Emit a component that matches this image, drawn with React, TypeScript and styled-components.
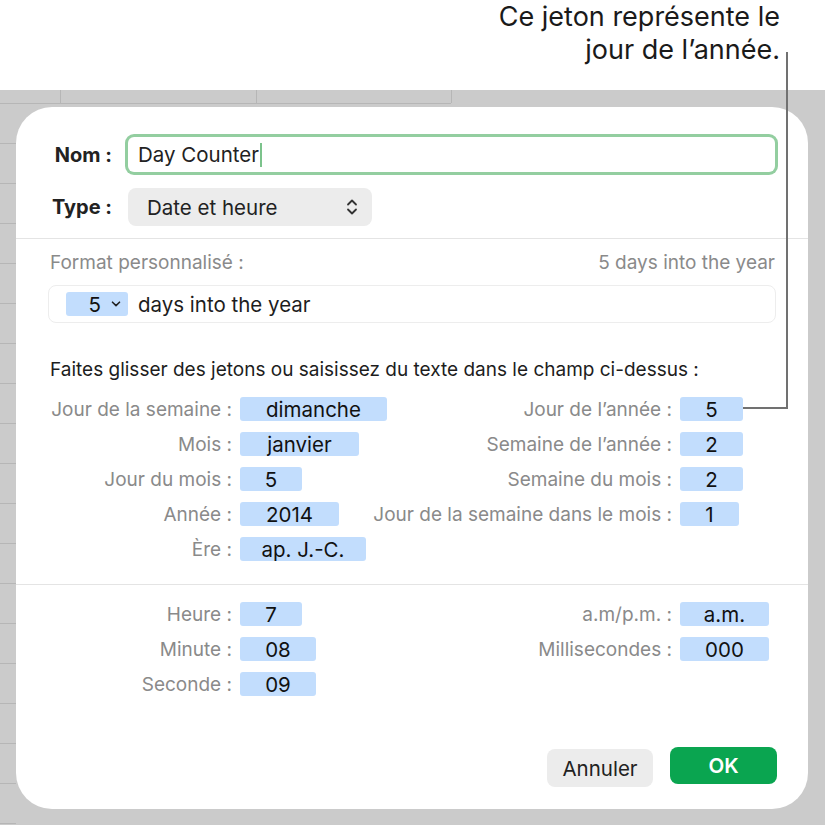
import React from "react";
import styled, { createGlobalStyle } from "styled-components";

const GlobalStyle = createGlobalStyle`
  html, body {
    margin: 0;
    padding: 0;
    background: #fff;
  }
  body {
    font-family: Inter, "Liberation Sans", sans-serif;
    -webkit-font-smoothing: antialiased;
  }
`;

type TokenRow = [string, string, number];

const dateLeft: TokenRow[] = [
  ["Jour de la semaine :", "dimanche", 147],
  ["Mois :", "janvier", 119],
  ["Jour du mois :", "5", 62],
  ["Année :", "2014", 99],
  ["Ère :", "ap. J.-C.", 126],
];

const dateRight: TokenRow[] = [
  ["Jour de l’année :", "5", 63],
  ["Semaine de l’année :", "2", 63],
  ["Semaine du mois :", "2", 63],
  ["Jour de la semaine dans le mois :", "1", 59],
];

const timeLeft: TokenRow[] = [
  ["Heure :", "7", 62],
  ["Minute :", "08", 76],
  ["Seconde :", "09", 76],
];

const timeRight: TokenRow[] = [
  ["a.m/p.m. :", "a.m.", 89],
  ["Millisecondes :", "000", 89],
];

const Tokens: React.FC<{ left: TokenRow[]; right: TokenRow[] }> = ({ left, right }) => (
  <TokenGrid>
    {left.map((row, i) => (
      <React.Fragment key={row[0]}>
        <TokenLabel>{row[0]}</TokenLabel>
        <Token $w={row[2]}>{row[1]}</Token>
        {right[i] ? (
          <>
            <TokenLabel>{right[i][0]}</TokenLabel>
            <Token $w={right[i][2]}>{right[i][1]}</Token>
          </>
        ) : (
          <>
            <span />
            <span />
          </>
        )}
      </React.Fragment>
    ))}
  </TokenGrid>
);

export default function App() {
  return (
    <Page>
      <GlobalStyle />
      <Callout>
        Ce jeton représente le
        <br />
        jour de l’année.
      </Callout>
      <Desktop>
        <Dialog>
          <Header>
            <FieldLabel>Nom :</FieldLabel>
            <NameInput>
              Day Counter
              <Caret />
            </NameInput>
            <FieldLabel>Type :</FieldLabel>
            <Select>
              <span>Date et heure</span>
              <svg width="12" height="18" viewBox="0 0 12 18" fill="none">
                <path d="M2 6.5 L6 2.5 L10 6.5" stroke="#333" strokeWidth="1.8" strokeLinecap="round" strokeLinejoin="round" />
                <path d="M2 11.5 L6 15.5 L10 11.5" stroke="#333" strokeWidth="1.8" strokeLinecap="round" strokeLinejoin="round" />
              </svg>
            </Select>
          </Header>

          <FormatSection>
            <FormatHead>
              <Muted>Format personnalisé :</Muted>
              <Muted>5 days into the year</Muted>
            </FormatHead>
            <FormatField>
              <MenuToken>
                5
                <svg width="10" height="6" viewBox="0 0 10 6" fill="none">
                  <path d="M1.5 1.2 L5 4.6 L8.5 1.2" stroke="#222" strokeWidth="1.6" strokeLinecap="round" strokeLinejoin="round" />
                </svg>
              </MenuToken>
              <FieldText>days into the year</FieldText>
            </FormatField>
            <Hint>Faites glisser des jetons ou saisissez du texte dans le champ ci-dessus :</Hint>
            <Tokens left={dateLeft} right={dateRight} />
          </FormatSection>

          <TimeSection>
            <Tokens left={timeLeft} right={timeRight} />
            <Actions>
              <CancelButton>Annuler</CancelButton>
              <OkButton>OK</OkButton>
            </Actions>
          </TimeSection>
        </Dialog>
      </Desktop>
      <Leader />
    </Page>
  );
}

const Page = styled.div`
  position: relative;
  width: 825px;
  height: 827px;
  overflow: hidden;
  background: #fff;
`;

const Callout = styled.div`
  height: 90px;
  box-sizing: border-box;
  padding: 0 45px 0 0;
  text-align: right;
  font-size: 27px;
  line-height: 33px;
  color: #1a1a1a;
`;

const Desktop = styled.div`
  height: 735px;
  box-sizing: border-box;
  padding: 17px 17px 16px 16px;
  background-color: #cbcbcb;
  background-image:
    repeating-linear-gradient(to bottom, transparent 0 13px, #b6b6b6 13px 14px, transparent 14px 40px),
    linear-gradient(#b6b6b6, #b6b6b6),
    linear-gradient(#b6b6b6, #b6b6b6),
    linear-gradient(#b6b6b6, #b6b6b6),
    linear-gradient(#b6b6b6, #b6b6b6);
  background-size: 16px 100%, 451px 1px, 1px 13px, 1px 13px, 1px 13px;
  background-position: 0 0, 0 13px, 60px 0, 256px 0, 451px 0;
  background-repeat: no-repeat;
`;

const Dialog = styled.div`
  height: 100%;
  background: #fff;
  border-radius: 36px;
  display: flex;
  flex-direction: column;
`;

const Header = styled.div`
  display: grid;
  grid-template-columns: 76px 1fr;
  column-gap: 16px;
  row-gap: 16px;
  align-items: center;
  padding: 30px 33px 12px 20px;
`;

const FieldLabel = styled.div`
  text-align: right;
  font-size: 20px;
  font-weight: 700;
  color: #222;
  white-space: nowrap;
`;

const NameInput = styled.div`
  height: 35px;
  display: flex;
  align-items: center;
  padding-left: 10px;
  border-radius: 6px;
  box-shadow: 0 0 0 3px #93cea0;
  font-size: 20.5px;
  color: #222;
`;

const Caret = styled.span`
  width: 2px;
  height: 24px;
  margin-left: 1px;
  background: #7cc38c;
`;

const Select = styled.div`
  width: 244px;
  height: 38px;
  box-sizing: border-box;
  display: flex;
  align-items: center;
  justify-content: space-between;
  padding: 0 14px 0 19px;
  border-radius: 8px;
  background: #ececec;
  font-size: 20.5px;
  color: #222;
`;

const FormatSection = styled.div`
  border-top: 1px solid #e4e4e4;
  padding: 13px 32px 23px 32px;
  display: flex;
  flex-direction: column;
`;

const FormatHead = styled.div`
  display: flex;
  justify-content: space-between;
  padding: 0 1px 0 2px;
  line-height: 22px;
`;

const Muted = styled.span`
  font-size: 19px;
  color: #8a8a8a;
`;

const FormatField = styled.div`
  margin-top: 11px;
  height: 38px;
  box-sizing: border-box;
  display: flex;
  align-items: center;
  gap: 10px;
  padding-left: 17px;
  border: 1px solid #ededed;
  border-radius: 8px;
`;

const MenuToken = styled.div`
  width: 62px;
  height: 24px;
  box-sizing: border-box;
  display: flex;
  align-items: center;
  justify-content: flex-end;
  gap: 10px;
  padding-right: 7px;
  border-radius: 3px;
  background: #c2ddfd;
  font-size: 20.5px;
  color: #111;
`;

const FieldText = styled.span`
  font-size: 20.5px;
  color: #1d1d1d;
`;

const Hint = styled.div`
  margin-top: 36px;
  padding-left: 2px;
  font-size: 19px;
  line-height: 22px;
  color: #1d1d1d;
  white-space: nowrap;
`;

const TokenGrid = styled.div`
  margin-top: 16px;
  display: grid;
  grid-template-columns: 184px 110px 1fr 96px;
  grid-auto-rows: 24px;
  column-gap: 8px;
  row-gap: 11px;
  align-items: center;
`;

const TokenLabel = styled.div`
  text-align: right;
  font-size: 19px;
  color: #8a8a8a;
  white-space: nowrap;
`;

const Token = styled.div<{ $w: number }>`
  width: ${(p) => p.$w}px;
  height: 24px;
  display: flex;
  align-items: center;
  justify-content: center;
  border-radius: 3px;
  background: #c2ddfd;
  font-size: 20.5px;
  color: #111;
`;

const TimeSection = styled.div`
  border-top: 1px solid #e4e4e4;
  padding: 1px 32px 22px 32px;
  display: flex;
  flex-direction: column;
`;

const Actions = styled.div`
  margin: 51px -1px 0 0;
  display: flex;
  justify-content: flex-end;
  align-items: flex-start;
  gap: 17px;
`;

const CancelButton = styled.button`
  margin-top: 2px;
  width: 106px;
  height: 38px;
  border: none;
  border-radius: 8px;
  background: #ececec;
  font-family: inherit;
  font-size: 20.5px;
  color: #222;
`;

const OkButton = styled.button`
  width: 107px;
  height: 37px;
  border: none;
  border-radius: 8px;
  background: #0aa550;
  font-family: inherit;
  font-size: 20.5px;
  font-weight: 600;
  color: #fff;
`;

const Leader = styled.div`
  position: absolute;
  left: 743px;
  top: 52px;
  width: 43px;
  height: 355px;
  border-right: 2px solid #717171;
  border-bottom: 2px solid #717171;
`;
